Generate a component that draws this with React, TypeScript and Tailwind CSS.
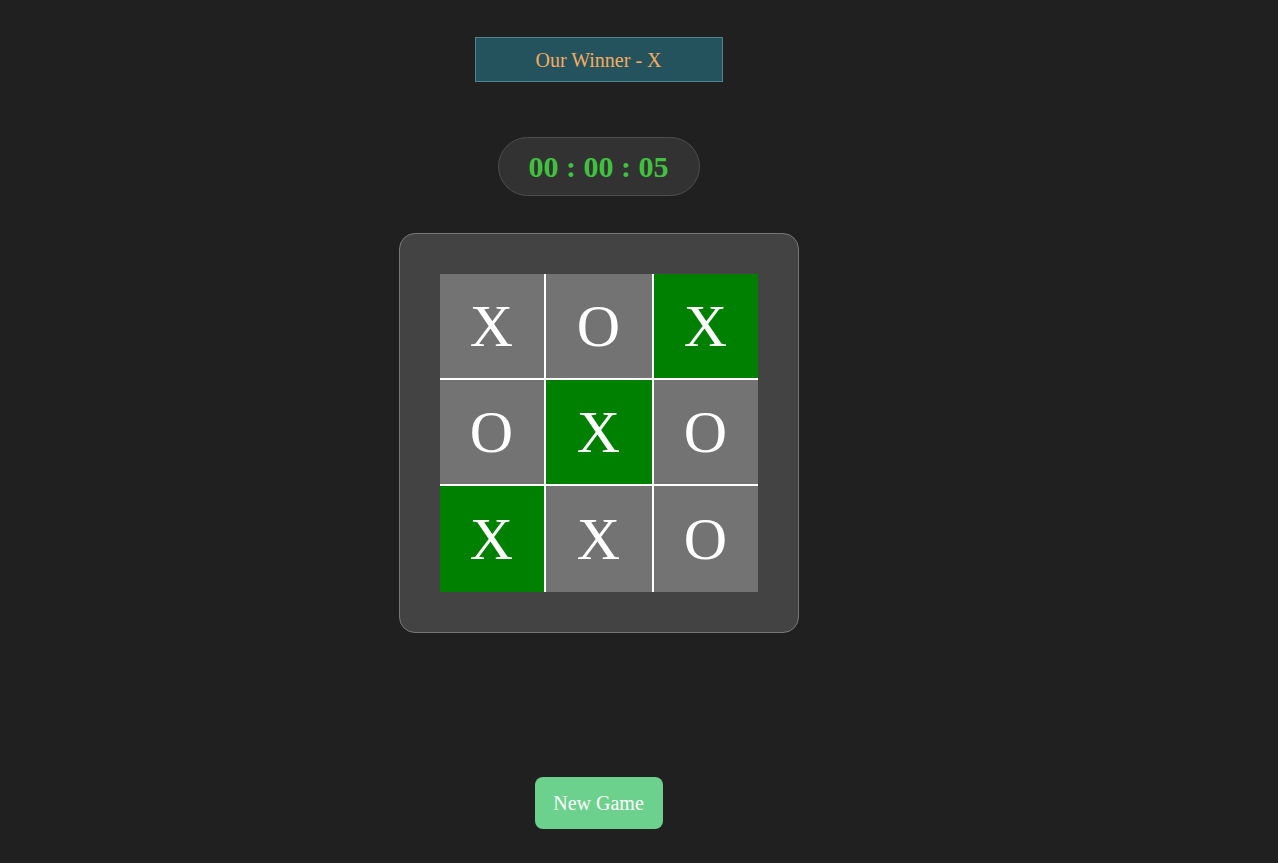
const board = ['X', 'O', 'X', 'O', 'X', 'O', 'X', 'X', 'O'];
const winLine = [2, 4, 6];

export default function App() {
  return (
    <div className="min-h-[863px] bg-[#202020] font-['Liberation_Serif',serif]">
      <div className="w-[1197px] flex flex-col items-center pt-[37px]">
        {/* Winner banner */}
        <div className="w-[248px] h-[45px] flex items-center justify-center bg-[#24525d] border border-[#4d8590] text-[20px] text-[#f4ac60]">
          Our Winner - X
        </div>

        {/* Timer */}
        <div className="mt-[55px] w-[202px] h-[59px] flex items-center justify-center rounded-full bg-[#323232] border border-[#4e4e4e] text-[30px] font-bold text-[#40c23f]">
          00 : 00 : 05
        </div>

        {/* Board */}
        <div className="mt-[37px] w-[400px] h-[400px] p-[40px] rounded-[16px] bg-[#434343] border border-[#777]">
          <div className="grid grid-cols-[104px_106px_104px] grid-rows-[104px_104px_106px] gap-[2px] bg-white w-[318px] h-[318px]">
            {board.map((v, i) => (
              <div
                key={i}
                className={`flex items-center justify-center text-[60px] leading-none text-white ${
                  winLine.includes(i) ? 'bg-[#008000]' : 'bg-[#737373]'
                }`}
              >
                {v}
              </div>
            ))}
          </div>
        </div>

        <button className="mt-[144px] w-[128px] h-[52px] rounded-[8px] bg-[#6bd18c] text-white text-[20px]">
          New Game
        </button>
      </div>
    </div>
  );
}
